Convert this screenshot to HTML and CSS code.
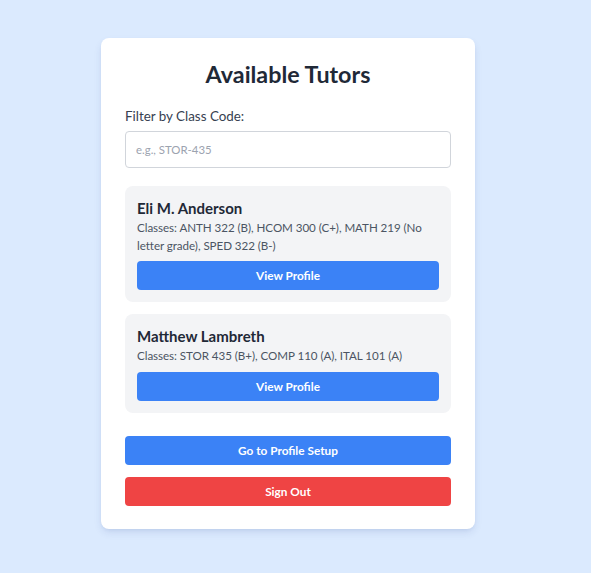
FILE: index.html
```
<!DOCTYPE html>
<html lang="en">
<head>
<meta charset="utf-8">
<title>Available Tutors</title>
<link rel="stylesheet" href="styles.css">
</head>
<body>
<div class="page">
  <main class="panel">
    <h1 class="title">Available Tutors</h1>
    <label class="label" for="filter">Filter by Class Code:</label>
    <input class="input" id="filter" type="text" placeholder="e.g., STOR-435">
    <div class="list">
      <div class="tutor">
        <h2 class="name">Eli M. Anderson</h2>
        <p class="classes">Classes: ANTH 322 (B), HCOM 300 (C+), MATH 219 (No letter grade), SPED 322 (B-)</p>
        <button class="btn btn-blue">View Profile</button>
      </div>
      <div class="tutor">
        <h2 class="name">Matthew Lambreth</h2>
        <p class="classes">Classes: STOR 435 (B+), COMP 110 (A), ITAL 101 (A)</p>
        <button class="btn btn-blue">View Profile</button>
      </div>
    </div>
    <div class="actions">
      <button class="btn btn-blue">Go to Profile Setup</button>
      <button class="btn btn-red">Sign Out</button>
    </div>
  </main>
</div>
</body>
</html>
```
FILE: styles.css
```
* { box-sizing: border-box; }
html, body {
  margin: 0;
  padding: 0;
  background: #dbeafe;
  height: 100%;
}
body {
  font-family: Lato, "Noto Sans", sans-serif;
  color: #1f2937;
}
.page {
  width: 576px;
  display: flex;
  justify-content: center;
  padding-top: 38px;
}
.panel {
  width: 374px;
  background: #ffffff;
  border-radius: 8px;
  box-shadow: 0 4px 8px -1px rgba(30, 58, 138, 0.12), 0 2px 4px -2px rgba(30, 58, 138, 0.1);
  padding: 23px 24px 23px;
  display: flex;
  flex-direction: column;
}
.title {
  margin: 0 0 17px;
  font-size: 23.3px;
  line-height: 27px;
  font-weight: 700;
  text-align: center;
  color: #1f2937;
}
.label {
  font-size: 13.4px;
  line-height: 20px;
  color: #374151;
  margin-top: 1px;
  margin-bottom: 5px;
}
.input {
  height: 37px;
  width: 100%;
  border: 1px solid #d1d5db;
  border-radius: 4px;
  padding: 0 10px;
  font-family: inherit;
  font-size: 11.4px;
  color: #1f2937;
  background: #fff;
  outline: none;
}
.input::placeholder { color: #9ca3af; }
.list {
  margin-top: 18px;
  display: flex;
  flex-direction: column;
  gap: 12px;
}
.tutor {
  background: #f3f4f6;
  border-radius: 8px;
  padding: 12px;
  display: flex;
  flex-direction: column;
}
.name {
  margin: 0 0 1px;
  font-size: 15px;
  line-height: 20px;
  font-weight: 700;
  color: #1f2937;
}
.classes {
  margin: 0 0 7px;
  font-size: 11.6px;
  line-height: 17.5px;
  letter-spacing: -0.05px;
  color: #4b5563;
}
.btn {
  display: block;
  width: 100%;
  height: 29px;
  border: none;
  border-radius: 4px;
  font-family: inherit;
  font-size: 11.8px;
  font-weight: 700;
  color: #ffffff;
  cursor: pointer;
  padding: 0;
}
.btn-blue { background: #3b82f6; }
.btn-red { background: #ef4444; }
.actions {
  margin-top: 23px;
  display: flex;
  flex-direction: column;
  gap: 12px;
}
```
